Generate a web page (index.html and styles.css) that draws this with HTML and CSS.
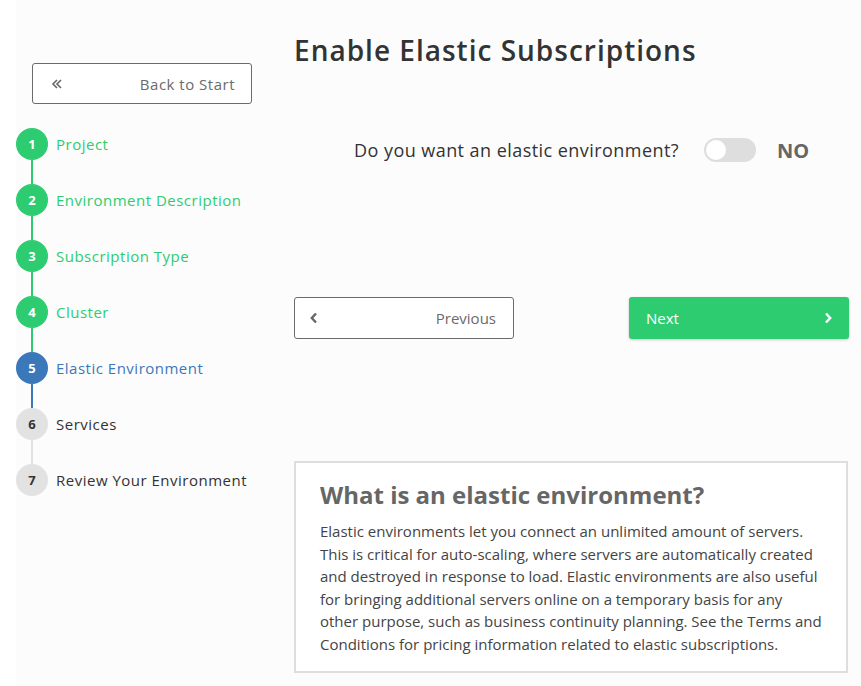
FILE: index.html
```html
<!DOCTYPE html>
<html>
<head>
<meta charset="utf-8">
<link rel="stylesheet" href="styles.css">
</head>
<body>
<div class="page">
  <aside class="sidebar">
    <button class="back-btn">
      <svg class="back-icon" width="12" height="12" viewBox="0 0 12 12"><path d="M6 2 L2 6 L6 10 M10 2 L6 6 L10 10" fill="none" stroke="#666" stroke-width="1.6"/></svg>
      <span>Back to Start</span>
    </button>
    <ol class="steps">
      <li class="step done"><div class="marker"><span class="num">1</span><span class="line"></span></div><span class="label">Project</span></li>
      <li class="step done"><div class="marker"><span class="num">2</span><span class="line"></span></div><span class="label">Environment Description</span></li>
      <li class="step done"><div class="marker"><span class="num">3</span><span class="line"></span></div><span class="label">Subscription Type</span></li>
      <li class="step done"><div class="marker"><span class="num">4</span><span class="line"></span></div><span class="label">Cluster</span></li>
      <li class="step current"><div class="marker"><span class="num">5</span><span class="line"></span></div><span class="label">Elastic Environment</span></li>
      <li class="step todo"><div class="marker"><span class="num">6</span><span class="line"></span></div><span class="label">Services</span></li>
      <li class="step todo"><div class="marker"><span class="num">7</span></div><span class="label">Review Your Environment</span></li>
    </ol>
  </aside>
  <main class="main">
    <h1 class="title">Enable Elastic Subscriptions</h1>
    <div class="question-row">
      <span class="question">Do you want an elastic environment?</span>
      <span class="toggle"><span class="knob"></span></span>
      <span class="toggle-label">NO</span>
    </div>
    <div class="nav-row">
      <button class="nav-btn prev">
        <svg width="10" height="12" viewBox="0 0 10 12"><path d="M7 1.5 L2.8 6 L7 10.5" fill="none" stroke="#666" stroke-width="2.4"/></svg>
        <span>Previous</span>
      </button>
      <button class="nav-btn next">
        <span>Next</span>
        <svg width="10" height="12" viewBox="0 0 10 12"><path d="M3 1.5 L7.2 6 L3 10.5" fill="none" stroke="#fff" stroke-width="2.4"/></svg>
      </button>
    </div>
    <section class="info">
      <h2 class="info-title">What is an elastic environment?</h2>
      <p class="info-text">Elastic environments let you connect an unlimited amount of servers. This is critical for auto-scaling, where servers are automatically created and destroyed in response to load. Elastic environments are also useful for bringing additional servers online on a temporary basis for any other purpose, such as business continuity planning. See the Terms and Conditions for pricing information related to elastic subscriptions.</p>
    </section>
  </main>
</div>
</body>
</html>
```

FILE: styles.css
```css
* { box-sizing: border-box; }
html, body { margin: 0; padding: 0; background: #ffffff; }
body {
  font-family: "Open Sans", "Noto Sans", sans-serif;
  color: #333;
}
.page {
  display: flex;
  margin-left: 16px;
  min-height: 686px;
  background: #fcfcfc;
}
.sidebar {
  width: 262px;
  padding: 63px 0 0 16px;
  flex-shrink: 0;
}
.back-btn {
  display: flex;
  align-items: center;
  justify-content: space-between;
  width: 220px;
  height: 41px;
  padding: 0 16px 0 18px;
  border: 1px solid #6b6b6b;
  border-radius: 3px;
  background: #fff;
  font-family: "Open Sans", sans-serif;
  font-size: 15px;
  letter-spacing: 0.5px;
  color: #6b6b6b;
}
.steps {
  list-style: none;
  margin: 24px 0 0 0;
  padding: 0;
}
.step {
  display: flex;
  align-items: flex-start;
  gap: 8px;
}
.marker {
  display: flex;
  flex-direction: column;
  align-items: center;
  width: 32px;
  margin-left: -16px;
}
.num {
  width: 32px;
  height: 32px;
  border-radius: 50%;
  display: flex;
  align-items: center;
  justify-content: center;
  font-size: 13px;
  font-weight: 700;
  color: #fff;
}
.line {
  width: 2px;
  height: 24px;
}
.label {
  line-height: 32px;
  font-size: 15px;
  letter-spacing: 0.5px;
}
.done .num, .done .line { background: #2ecc71; }
.done .label { color: #2ecc71; }
.current .num, .current .line { background: #3b78b9; }
.current .label { color: #3b78b9; }
.todo .num { background: #e2e2e2; color: #333; }
.todo .line { background: #e2e2e2; }
.todo .label { color: #333; }

.main {
  width: 555px;
  margin-left: 16px;
  padding-top: 32px;
}
.title {
  margin: 0;
  font-size: 28px;
  line-height: 36px;
  font-weight: 600;
  letter-spacing: 1px;
  color: #333;
}
.question-row {
  display: flex;
  align-items: center;
  margin: 67px 0 0 60px;
  height: 30px;
}
.question {
  font-size: 18px;
  letter-spacing: 0.45px;
  color: #333;
}
.toggle {
  display: block;
  width: 52px;
  height: 24px;
  border-radius: 12px;
  background: #dedede;
  margin-left: 25px;
  padding: 2px;
}
.knob {
  display: block;
  width: 20px;
  height: 20px;
  border-radius: 50%;
  background: #fff;
}
.toggle-label {
  margin-left: 21px;
  font-size: 20px;
  font-weight: 700;
  color: #666;
}
.nav-row {
  display: flex;
  justify-content: space-between;
  margin-top: 132px;
}
.nav-btn {
  display: flex;
  align-items: center;
  justify-content: space-between;
  width: 220px;
  height: 42px;
  border-radius: 3px;
  font-family: "Open Sans", sans-serif;
  font-size: 15px;
}
.prev {
  border: 1px solid #6b6b6b;
  background: #fff;
  color: #6b6b6b;
  padding: 0 17px 0 14px;
}
.next {
  border: none;
  background: #2ecc71;
  color: #fff;
  padding: 0 16px 0 17px;
  margin-right: 0;
  box-shadow: 0 1px 3px rgba(0,0,0,0.2);
}
.info {
  margin-top: 122px;
  width: 554px;
  border: 2px solid #dedede;
  background: #fff;
  padding: 17px 24px 15px 24px;
}
.info-title {
  margin: 0 0 10px 0;
  font-size: 24px;
  line-height: 30px;
  font-weight: 700;
  color: #666;
}
.info-text {
  margin: 0;
  font-size: 15px;
  line-height: 22.6px;
  color: #444;
}
```
